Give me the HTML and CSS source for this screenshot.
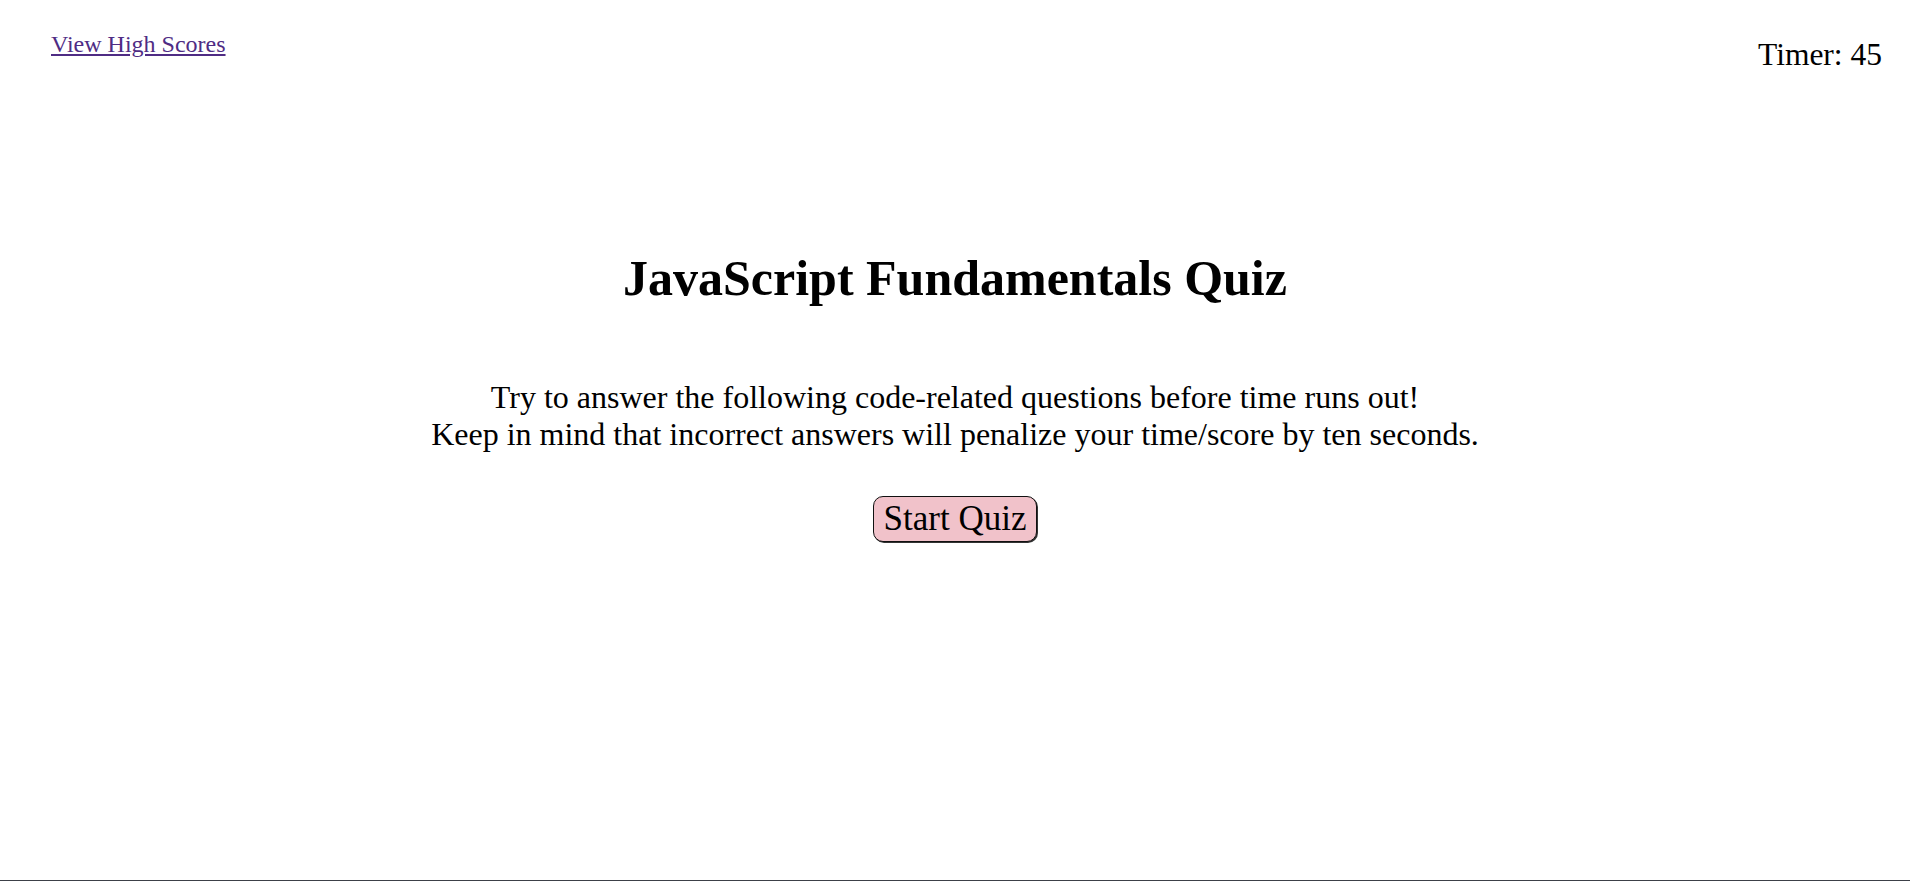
FILE: index.html
```html
<!DOCTYPE html>
<html lang="en">
<head>
<meta charset="utf-8">
<title>JavaScript Fundamentals Quiz</title>
<link rel="stylesheet" href="styles.css">
</head>
<body>
<div class="page">
  <header class="top-bar">
    <a class="scores-link" href="#">View High Scores</a>
    <div class="timer">Timer: 45</div>
  </header>
  <main class="intro">
    <h1 class="title">JavaScript Fundamentals Quiz</h1>
    <p class="lead">Try to answer the following code-related questions before time runs out!<br>Keep in mind that incorrect answers will penalize your time/score by ten seconds.</p>
    <button class="start-btn" type="button">Start Quiz</button>
  </main>
</div>
</body>
</html>
```
FILE: styles.css
```css
html, body {
  margin: 0;
  padding: 0;
  background: #fff;
}
body {
  font-family: "Liberation Serif", "Times New Roman", serif;
  color: #000;
}
.page {
  box-sizing: border-box;
  height: 100vh;
  border-bottom: 1px solid #3c4048;
  display: flex;
  flex-direction: column;
}
.top-bar {
  display: flex;
  justify-content: space-between;
  align-items: flex-start;
  padding: 0 28px 0 51px;
}
.scores-link {
  margin-top: 31px;
  font-size: 24px;
  color: #4f2c84;
  text-decoration: underline;
}
.timer {
  margin-top: 37px;
  font-size: 31.5px;
}
.intro {
  display: flex;
  flex-direction: column;
  align-items: center;
  text-align: center;
}
.title {
  margin: 176px 0 0;
  font-size: 50px;
  font-weight: bold;
}
.lead {
  margin: 72px 0 0;
  font-size: 32px;
}
.start-btn {
  margin-top: 43px;
  font-family: inherit;
  font-size: 35px;
  color: #000;
  background: #f1c2ca;
  border: 1px solid #111;
  box-shadow: 1px 1px 0 #333;
  border-radius: 10px;
  padding: 2px 10px;
  cursor: pointer;
}
```
